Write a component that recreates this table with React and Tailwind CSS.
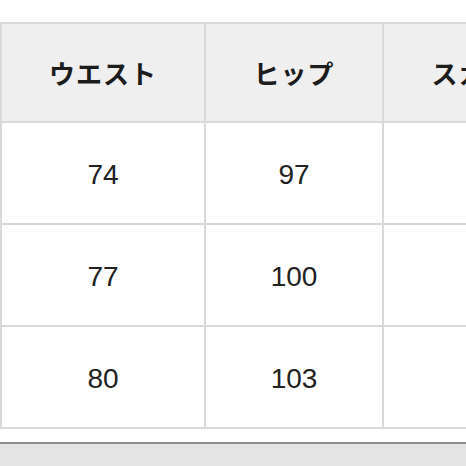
export default function App() {
  const header = ['ウエスト', 'ヒップ', 'スカート丈'];
  const rows = [
    ['74', '97', ''],
    ['77', '100', ''],
    ['80', '103', ''],
  ];

  return (
    <div className="w-[466px] h-[466px] overflow-hidden bg-white flex flex-col">
      {/* size table */}
      <div className="pt-[22px] overflow-hidden">
        <div className="grid grid-cols-[202px_176px_230px] gap-[2px] p-[2px] bg-[#d9d9d9] w-max">
          {header.map((h) => (
            <div
              key={h}
              className="h-[97px] bg-[#efefef] flex items-center justify-center text-[26px] font-bold text-[#1c1c1c] tracking-[1px]"
              style={{ fontFamily: '"Noto Sans CJK JP", "Noto Sans", sans-serif' }}
            >
              {h}
            </div>
          ))}
          {rows.map((r, i) =>
            r.map((c, j) => (
              <div
                key={i + '-' + j}
                className="h-[100px] bg-white flex items-center justify-center text-[28px] text-[#222] pt-[3px]"
                style={{ fontFamily: '"Liberation Sans", Arial, sans-serif' }}
              >
                {c}
              </div>
            ))
          )}
        </div>
      </div>

      {/* bottom bar */}
      <div className="h-[13px] bg-white" />
      <div className="flex-1 bg-[#e4e4e4] border-t-2 border-[#8c8c8c]" />
    </div>
  );
}
